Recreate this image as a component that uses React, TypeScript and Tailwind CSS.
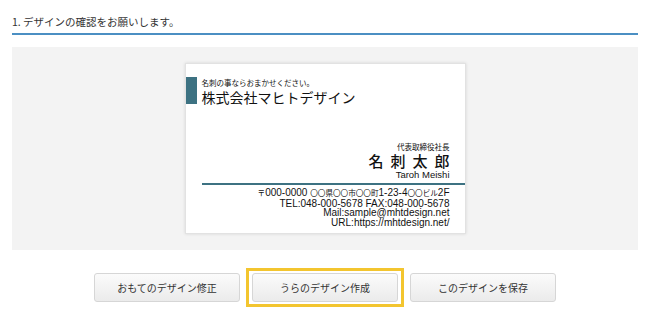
import React from 'react';

const jp = { fontFamily: '"Noto Sans CJK JP", "Noto Sans", sans-serif' };
const mixed = { fontFamily: '"Liberation Sans", "Noto Sans CJK JP", sans-serif' };

const Button = ({ label }: { label: string }) => (
  <button
    className="w-[146px] h-[29px] rounded-[3px] border border-[#d6d6d6] bg-gradient-to-b from-[#fbfbfb] to-[#ebebeb] text-[10px] text-[#333] leading-none"
    style={jp}
  >
    {label}
  </button>
);

export default function App() {
  return (
    <div className="w-[650px] h-[330px] bg-white px-3 overflow-hidden">
      {/* Section heading */}
      <div
        className="pt-[14px] pb-[3px] border-b-2 border-[#4b8fc3] text-[10.5px] leading-[16px] text-[#333]"
        style={jp}
      >
        1. デザインの確認をお願いします。
      </div>

      {/* Preview panel */}
      <div className="mt-[12px] h-[203px] bg-[#f3f3f3] flex justify-center pt-[16px]">
        <div className="w-[281px] h-[171px] bg-white border border-[#e2e2e2] shadow-[0_0_3px_rgba(0,0,0,0.12)] flex flex-col pt-[13px] text-[#111]">
          {/* Company */}
          <div className="flex items-start h-[27px]">
            <div className="w-[11px] h-[27px] bg-[#3d7282]" />
            <div className="pl-[5px]" style={jp}>
              <div className="text-[7.5px] leading-[11px]">名刺の事ならおまかせください。</div>
              <div className="text-[14px] leading-[19px]">株式会社マヒトデザイン</div>
            </div>
          </div>

          {/* Person */}
          <div className="mt-[38px] pr-[15px] flex flex-col items-end">
            <div className="text-[7.5px] leading-[10px]" style={jp}>代表取締役社長</div>
            <div className="flex gap-[7px] text-[15px] leading-[18px] font-medium" style={jp}>
              <span>名</span>
              <span>刺</span>
              <span>太</span>
              <span>郎</span>
            </div>
            <div className="text-[9.5px] leading-[10px]" style={mixed}>Taroh Meishi</div>
          </div>

          <div className="mt-[3px] ml-[16px] h-[2px] bg-[#3d7282]" />

          {/* Address */}
          <div className="mt-[3px] pr-[15px] flex flex-col items-end text-[10px] leading-[9.5px]" style={mixed}>
            <div>
              <span className="text-[7.6px]">〒</span>000-0000 <span className="text-[7.6px]">〇〇県〇〇市〇〇町</span>1-23-4<span className="text-[7.6px]">〇〇ビル</span>2F
            </div>
            <div>TEL:048-000-5678 FAX:048-000-5678</div>
            <div>Mail:sample@mhtdesign.net</div>
            <div>URL:https://mhtdesign.net/</div>
          </div>
        </div>
      </div>

      {/* Actions */}
      <div className="mt-[18px] flex justify-center items-center gap-[6px]">
        <Button label="おもてのデザイン修正" />
        <div className="border-[3px] border-[#f3c52f] px-[3px] py-[2px]">
          <Button label="うらのデザイン作成" />
        </div>
        <Button label="このデザインを保存" />
      </div>
    </div>
  );
}
